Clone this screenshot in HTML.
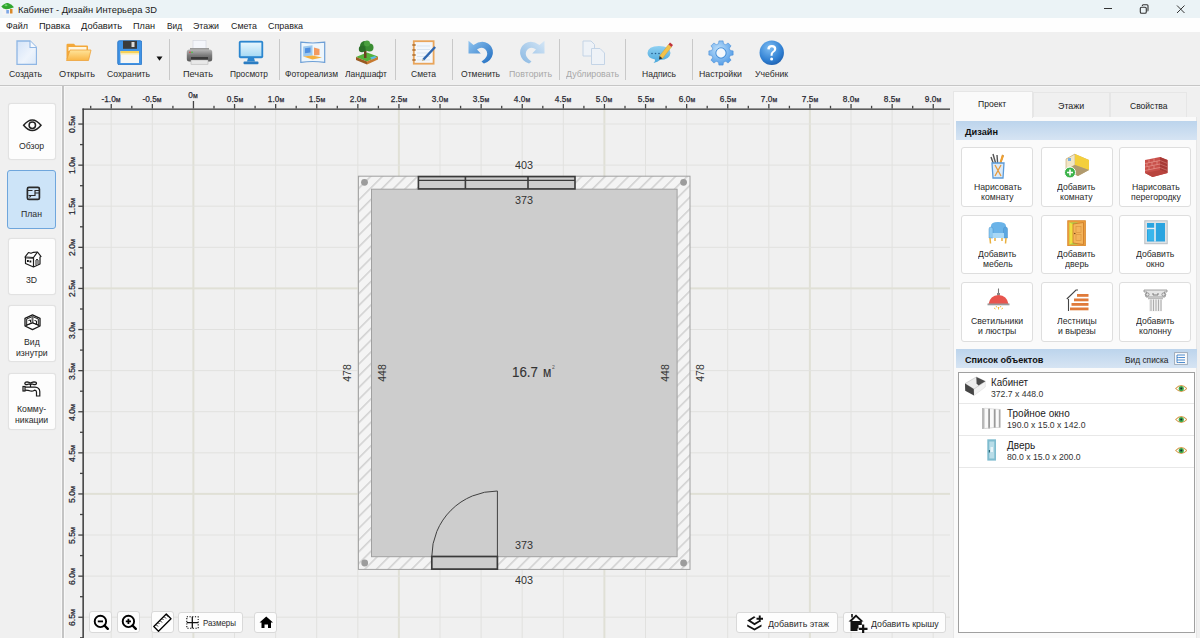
<!DOCTYPE html>
<html><head><meta charset="utf-8"><style>
*{margin:0;padding:0;box-sizing:border-box}
html,body{width:1200px;height:638px;overflow:hidden;background:#f0f0f0;font-family:"Liberation Sans",sans-serif;color:#222;position:relative}
.abs{position:absolute}
.rl{position:absolute;width:60px;text-align:center;font-size:9px;line-height:10px;color:#2a2a34;white-space:nowrap;transform:scaleX(.92);-webkit-text-stroke:0.25px #2a2a34}
.m{font-size:7.5px}
.rv{position:absolute;width:60px;text-align:center;font-size:9px;line-height:10px;color:#2a2a34;transform:rotate(-90deg) scaleX(.95);white-space:nowrap;-webkit-text-stroke:0.25px #2a2a34}
</style></head><body>
<div class="abs" style="left:0;top:0;width:1200px;height:17.5px;background:#ebf3f6"></div>
<div class="abs" style="left:0;top:17.5px;width:1200px;height:14.8px;background:#fefefe"></div>
<div class="abs" style="left:0;top:32.3px;width:1200px;height:52.7px;background:#f0f0f0"></div>
<div class="abs" style="left:0;top:84.8px;width:1200px;height:1.4px;background:#c6c6c6"></div><div class="abs" style="left:0;top:86.2px;width:1200px;height:1px;background:#f7f7f7"></div>
<svg class="abs" style="left:0;top:0" width="18" height="18" viewBox="0 0 18 18">
<path d="M2.5 8.5 L13 8.5 L13 15 L2.5 15Z" fill="#f4f4f4"/>
<path d="M1.3 6.5 Q5 2.5 8 3 Q12 4.5 14 7.3 Q9 9.5 6 9.3 Q3 9 1.3 6.5Z" fill="#2fa52f"/>
<ellipse cx="6" cy="5.3" rx="1.5" ry="1" fill="#6fd46f"/>
<rect x="6.3" y="10" width="2.6" height="3.5" fill="#7aa6e6"/>
<rect x="10" y="9" width="2.5" height="4.5" fill="#d98a2a"/>
</svg>
<div class="abs" style="left:18.00px;top:3.83px;font-size:9.5px;line-height:12.35px;color:#1a1a1a;white-space:nowrap;transform:scaleX(0.9815);transform-origin:0 50%;">Кабинет - Дизайн Интерьера 3D</div>
<div class="abs" style="left:1103.5px;top:8px;width:8px;height:1px;background:#333"></div>
<svg class="abs" style="left:1138px;top:4px" width="12" height="10" viewBox="0 0 12 10">
<rect x="2.3" y="3.3" width="6" height="6" rx="1.3" fill="none" stroke="#333" stroke-width="1.1"/>
<path d="M4.3 2 L4.3 1.8 Q4.3 0.8 5.3 0.8 L9 0.8 Q10 0.8 10 1.8 L10 6 Q10 7 9.5 7" fill="none" stroke="#333" stroke-width="1.1"/>
</svg>
<svg class="abs" style="left:1176px;top:4.5px" width="10" height="9" viewBox="0 0 10 9">
<path d="M1 0.5 L8.5 8 M8.5 0.5 L1 8" stroke="#333" stroke-width="1"/></svg>
<div class="abs" style="left:6.00px;top:20.25px;font-size:9.8px;line-height:11.7px;color:#1a1a1a;white-space:nowrap;transform:scaleX(0.9131);transform-origin:0 50%;">Файл</div>
<div class="abs" style="left:39.20px;top:20.25px;font-size:9.8px;line-height:11.7px;color:#1a1a1a;white-space:nowrap;transform:scaleX(0.9367);transform-origin:0 50%;">Правка</div>
<div class="abs" style="left:81.00px;top:20.25px;font-size:9.8px;line-height:11.7px;color:#1a1a1a;white-space:nowrap;transform:scaleX(0.9470);transform-origin:0 50%;">Добавить</div>
<div class="abs" style="left:133.00px;top:20.25px;font-size:9.8px;line-height:11.7px;color:#1a1a1a;white-space:nowrap;transform:scaleX(0.9312);transform-origin:0 50%;">План</div>
<div class="abs" style="left:167.00px;top:20.25px;font-size:9.8px;line-height:11.7px;color:#1a1a1a;white-space:nowrap;transform:scaleX(0.8458);transform-origin:0 50%;">Вид</div>
<div class="abs" style="left:193.00px;top:20.25px;font-size:9.8px;line-height:11.7px;color:#1a1a1a;white-space:nowrap;transform:scaleX(0.8995);transform-origin:0 50%;">Этажи</div>
<div class="abs" style="left:231.00px;top:20.25px;font-size:9.8px;line-height:11.7px;color:#1a1a1a;white-space:nowrap;transform:scaleX(0.9039);transform-origin:0 50%;">Смета</div>
<div class="abs" style="left:268.00px;top:20.25px;font-size:9.8px;line-height:11.7px;color:#1a1a1a;white-space:nowrap;transform:scaleX(0.9106);transform-origin:0 50%;">Справка</div>
<div class="abs" style="left:9.20px;top:68.25px;font-size:9.8px;line-height:11.7px;color:#2a2a2a;white-space:nowrap;transform:scaleX(0.8863);transform-origin:0 50%;">Создать</div>
<div class="abs" style="left:59.00px;top:68.25px;font-size:9.8px;line-height:11.7px;color:#2a2a2a;white-space:nowrap;transform:scaleX(0.9354);transform-origin:0 50%;">Открыть</div>
<div class="abs" style="left:107.00px;top:68.25px;font-size:9.8px;line-height:11.7px;color:#2a2a2a;white-space:nowrap;transform:scaleX(0.8832);transform-origin:0 50%;">Сохранить</div>
<div class="abs" style="left:183.00px;top:68.25px;font-size:9.8px;line-height:11.7px;color:#2a2a2a;white-space:nowrap;transform:scaleX(0.9348);transform-origin:0 50%;">Печать</div>
<div class="abs" style="left:230.00px;top:68.25px;font-size:9.8px;line-height:11.7px;color:#2a2a2a;white-space:nowrap;transform:scaleX(0.8492);transform-origin:0 50%;">Просмотр</div>
<div class="abs" style="left:285.00px;top:68.25px;font-size:9.8px;line-height:11.7px;color:#2a2a2a;white-space:nowrap;transform:scaleX(0.8649);transform-origin:0 50%;">Фотореализм</div>
<div class="abs" style="left:345.00px;top:68.25px;font-size:9.8px;line-height:11.7px;color:#2a2a2a;white-space:nowrap;transform:scaleX(0.8632);transform-origin:0 50%;">Ландшафт</div>
<div class="abs" style="left:411.00px;top:68.25px;font-size:9.8px;line-height:11.7px;color:#2a2a2a;white-space:nowrap;transform:scaleX(0.8691);transform-origin:0 50%;">Смета</div>
<div class="abs" style="left:460.50px;top:68.25px;font-size:9.8px;line-height:11.7px;color:#2a2a2a;white-space:nowrap;transform:scaleX(0.8712);transform-origin:0 50%;">Отменить</div>
<div class="abs" style="left:508.90px;top:68.25px;font-size:9.8px;line-height:11.7px;color:#a8a8a8;white-space:nowrap;transform:scaleX(0.8991);transform-origin:0 50%;">Повторить</div>
<div class="abs" style="left:565.50px;top:68.25px;font-size:9.8px;line-height:11.7px;color:#a8a8a8;white-space:nowrap;transform:scaleX(0.8976);transform-origin:0 50%;">Дублировать</div>
<div class="abs" style="left:641.80px;top:68.25px;font-size:9.8px;line-height:11.7px;color:#2a2a2a;white-space:nowrap;transform:scaleX(0.8711);transform-origin:0 50%;">Надпись</div>
<div class="abs" style="left:699.00px;top:68.25px;font-size:9.8px;line-height:11.7px;color:#2a2a2a;white-space:nowrap;transform:scaleX(0.8950);transform-origin:0 50%;">Настройки</div>
<div class="abs" style="left:754.90px;top:68.25px;font-size:9.8px;line-height:11.7px;color:#2a2a2a;white-space:nowrap;transform:scaleX(0.8811);transform-origin:0 50%;">Учебник</div>
<div class="abs" style="left:168.5px;top:38.5px;width:1.2px;height:41.5px;background:#c9c9c9"></div>
<div class="abs" style="left:279.0px;top:38.5px;width:1.2px;height:41.5px;background:#c9c9c9"></div>
<div class="abs" style="left:395.0px;top:38.5px;width:1.2px;height:41.5px;background:#c9c9c9"></div>
<div class="abs" style="left:451.5px;top:38.5px;width:1.2px;height:41.5px;background:#c9c9c9"></div>
<div class="abs" style="left:559.0px;top:38.5px;width:1.2px;height:41.5px;background:#c9c9c9"></div>
<div class="abs" style="left:625.2px;top:38.5px;width:1.2px;height:41.5px;background:#c9c9c9"></div>
<div class="abs" style="left:691.5px;top:38.5px;width:1.2px;height:41.5px;background:#c9c9c9"></div>
<svg class="abs" style="left:156px;top:56px" width="7" height="5"><path d="M0.5 0.5 L6.5 0.5 L3.5 4.8Z" fill="#111"/></svg>
<svg class="abs" style="left:15.5px;top:39.5px" width="21.5" height="25.5" viewBox="0 0 21.5 25.5">
<defs><linearGradient id="gdoc" x1="0" y1="0" x2="1" y2="1"><stop offset="0" stop-color="#d3e3f8"/><stop offset="0.6" stop-color="#eef4fc"/><stop offset="1" stop-color="#dbe8f8"/></linearGradient></defs>
<path d="M1 1 L14 1 L20.5 7.5 L20.5 24.5 L1 24.5Z" fill="url(#gdoc)" stroke="#8fb6e4" stroke-width="1.3"/>
<path d="M14 1 L14 7.5 L20.5 7.5" fill="#f6f9fd" stroke="#8fb6e4" stroke-width="1.1"/></svg>
<svg class="abs" style="left:64.5px;top:42.5px" width="27" height="18.5" viewBox="0 0 27 18.5">
<defs><linearGradient id="gfold" x1="0" y1="0" x2="0" y2="1"><stop offset="0" stop-color="#ffe49a"/><stop offset="1" stop-color="#f9b646"/></linearGradient></defs>
<path d="M1.5 2 Q1.5 0.8 2.7 0.8 L9 0.8 L10.5 2.5 L22 2.5 Q23 2.5 23 3.5 L23 16 L1.5 16Z" fill="#f3a83a"/>
<path d="M3.5 4 L21.5 4 L21.5 8 L3.5 8Z" fill="#fff6e0"/>
<path d="M5 7 L26 7 L23.5 17.5 L1.5 17.5 Z" fill="url(#gfold)" stroke="#eea23a" stroke-width="0.8"/></svg>
<svg class="abs" style="left:116.5px;top:39.5px" width="25.5" height="25.5" viewBox="0 0 25.5 25.5">
<rect x="0.8" y="0.8" width="24" height="24" rx="1.5" fill="#3f93e6" stroke="#2d78c8" stroke-width="1"/>
<rect x="6" y="0.8" width="14" height="8" fill="#3b3b3b"/>
<rect x="14.5" y="2" width="3" height="5" fill="#dcdcdc"/>
<rect x="3.5" y="11" width="18.5" height="12" fill="#f6f6f4"/>
<rect x="3.5" y="11" width="18.5" height="2.3" fill="#f6d15a"/>
<rect x="3.5" y="13.3" width="18.5" height="1.2" fill="#fbeaa8"/></svg>
<svg class="abs" style="left:186px;top:39.5px" width="27" height="25" viewBox="0 0 27 25">
<defs><linearGradient id="gpr" x1="0" y1="0" x2="0" y2="1"><stop offset="0" stop-color="#b8b8b8"/><stop offset="0.5" stop-color="#7a7a7a"/><stop offset="1" stop-color="#5a5a5a"/></linearGradient></defs>
<rect x="7" y="0.5" width="13" height="10" fill="#f4f6fb" stroke="#d0d4dc" stroke-width="0.6"/>
<path d="M4 8 L23 8 L23 10 L4 10Z" fill="#9a9a9a"/>
<rect x="0.8" y="9.5" width="25.4" height="12" rx="2.5" fill="url(#gpr)"/>
<rect x="5" y="17" width="17" height="3" fill="#3a3a3a"/>
<rect x="5" y="20" width="17" height="4.2" fill="#e8e8e8" stroke="#aaa" stroke-width="0.5"/>
<circle cx="4" cy="12.2" r="0.8" fill="#d33"/><circle cx="6" cy="12.2" r="0.8" fill="#3c3"/></svg>
<svg class="abs" style="left:237.5px;top:39.5px" width="26" height="25" viewBox="0 0 26 25">
<defs><linearGradient id="gmon" x1="0" y1="0" x2="0" y2="1"><stop offset="0" stop-color="#e6f6fd"/><stop offset="1" stop-color="#a8daf4"/></linearGradient></defs>
<rect x="0.8" y="0.8" width="24.4" height="17.5" rx="1.8" fill="#2b86cf"/>
<rect x="2.6" y="2.6" width="20.8" height="13.6" fill="url(#gmon)"/>
<path d="M10 18 L16 18 L17 21.5 L9 21.5Z" fill="#2b86cf"/>
<rect x="5.5" y="21.5" width="15" height="2.8" rx="1" fill="#2b7cc2"/></svg>
<svg class="abs" style="left:300px;top:41px" width="25.5" height="22.5" viewBox="0 0 25.5 22.5">
<path d="M0.8 1.2 Q12.7 2.8 24.7 1.2 L24.7 21.3 Q12.7 19.7 0.8 21.3Z" fill="#eef6fc" stroke="#6d9fd6" stroke-width="1.2"/>
<path d="M3.2 5.5 L12.5 4.2 L12.5 14.5 L3.2 15.5Z" fill="#9cc8ee"/>
<path d="M5 7.2 L10.5 6.5 L10.5 11.5 L5 12.2Z" fill="#4f8fe0"/>
<path d="M14 6.5 L19.5 8 L19.5 14 L14 14.5Z" fill="#f39a60"/>
<path d="M3.2 15.5 L12.5 14.5 L22 16.5 L12.5 18.5Z" fill="#f4b040"/>
</svg>
<svg class="abs" style="left:354.5px;top:39.5px" width="24" height="25" viewBox="0 0 24 25">
<path d="M1 17 L12 12.5 L23 16.5 L12 21.5Z" fill="#55b13a"/>
<path d="M1 17 L12 21.5 L12 24.5 L1 20Z" fill="#9a5a22"/>
<path d="M12 21.5 L23 16.5 L23 19.5 L12 24.5Z" fill="#c77a30"/>
<path d="M15 17.5 L20 16 L21.5 17.5 L17 19.5Z" fill="#5bb8e8"/>
<rect x="9" y="9" width="2.5" height="9" fill="#6b4220"/>
<circle cx="10" cy="6" r="5" fill="#2e7a2a"/><circle cx="14.5" cy="7.5" r="4" fill="#3a8d33"/><circle cx="7" cy="9" r="3.2" fill="#2a6e27"/><circle cx="12" cy="3.5" r="3" fill="#4aa03f"/></svg>
<svg class="abs" style="left:411px;top:39.5px" width="26" height="25" viewBox="0 0 26 25">
<rect x="2.8" y="1.2" width="19.8" height="22.5" fill="#f3f7fc" stroke="#e9a55b" stroke-width="1.8"/>
<path d="M6 6 L19 6 M6 9.5 L19 9.5 M6 13 L19 13 M6 16.5 L19 16.5 M6 20 L19 20" stroke="#cddbea" stroke-width="0.7"/>
<g fill="#b77a3e"><ellipse cx="3" cy="5" rx="2" ry="1.1"/><ellipse cx="3" cy="10" rx="2" ry="1.1"/><ellipse cx="3" cy="15" rx="2" ry="1.1"/><ellipse cx="3" cy="20" rx="2" ry="1.1"/></g>
<path d="M11.5 18.8 L23.3 6.2 L25 7.8 L13.2 20.4Z" fill="#2f67b0"/>
<path d="M11.5 18.8 L13.2 20.4 L10.8 21.2Z" fill="#c8b890"/></svg>
<svg class="abs" style="left:467.5px;top:40px" width="26" height="24" viewBox="0 0 26 24">
<defs><linearGradient id="gund" x1="0" y1="0" x2="1" y2="1"><stop offset="0" stop-color="#8fc4f0"/><stop offset="1" stop-color="#1f6cc0"/></linearGradient></defs>
<path d="M0.5 0.8 L0.5 13.5 L12.8 13.5 L9 9.5 Q13 6.5 17 9 Q20.5 12 18.5 16.5 Q17 19.5 13.5 21.5 Q15.5 23.5 16 23.5 Q23.5 21 24.8 14 Q25.5 7 20 3.5 Q13.5 -0.5 5.5 5Z" fill="url(#gund)"/></svg>
<svg class="abs" style="left:519px;top:40px" width="26" height="24" viewBox="0 0 26 24">
<defs><linearGradient id="gred" x1="1" y1="0" x2="0" y2="1"><stop offset="0" stop-color="#d4e6f6"/><stop offset="1" stop-color="#8ab8e2"/></linearGradient></defs>
<path d="M25.5 0.8 L25.5 13.5 L13.2 13.5 L17 9.5 Q13 6.5 9 9 Q5.5 12 7.5 16.5 Q9 19.5 12.5 21.5 Q10.5 23.5 10 23.5 Q2.5 21 1.2 14 Q0.5 7 6 3.5 Q12.5 -0.5 20.5 5Z" fill="url(#gred)"/></svg>
<svg class="abs" style="left:581.5px;top:39.5px" width="23.5" height="25.5" viewBox="0 0 23.5 25.5">
<path d="M1 1 L9 1 L12.5 4.5 L12.5 16 L1 16Z" fill="#eef2f7" stroke="#c4d4e6" stroke-width="1"/>
<path d="M9.5 8.5 L18 8.5 L22.5 13 L22.5 24.5 L9.5 24.5Z" fill="#eef2f7" stroke="#c4d4e6" stroke-width="1"/></svg>
<svg class="abs" style="left:647px;top:41px" width="26" height="23" viewBox="0 0 26 23">
<defs><linearGradient id="gbub" x1="0" y1="0" x2="0" y2="1"><stop offset="0" stop-color="#8fd0f2"/><stop offset="1" stop-color="#4aa8dc"/></linearGradient></defs>
<path d="M12 5 Q23 5 23.5 12 Q23 18.5 13 19 Q11 21 6.5 22 Q8.5 20 8 18.5 Q0.5 17 0.5 12 Q1 5 12 5Z" fill="url(#gbub)"/>
<circle cx="5" cy="12.5" r="0.8" fill="#245e8f"/><circle cx="8.5" cy="12.5" r="0.8" fill="#245e8f"/><circle cx="12" cy="12.5" r="0.8" fill="#245e8f"/>
<path d="M12.5 15 L21.5 3.5 L24.5 6 L15.5 17.5Z" fill="#f3c24a" stroke="#c99a2a" stroke-width="0.4"/>
<path d="M21.5 3.5 L23 1.5 L26 4 L24.5 6Z" fill="#c0333a"/>
<path d="M12.5 15 L15.5 17.5 L12 18.5Z" fill="#333"/></svg>
<svg class="abs" style="left:708px;top:39.5px" width="26" height="26" viewBox="0 0 26 26">
<defs><radialGradient id="ggear" cx="0.4" cy="0.35" r="0.7"><stop offset="0" stop-color="#bfe0fb"/><stop offset="1" stop-color="#4f9ae6"/></radialGradient></defs>
<polygon points="22.28,10.53 25.12,10.92 25.12,15.08 22.28,15.47 21.31,17.81 23.04,20.10 20.10,23.04 17.81,21.31 15.47,22.28 15.08,25.12 10.92,25.12 10.53,22.28 8.19,21.31 5.90,23.04 2.96,20.10 4.69,17.81 3.72,15.47 0.88,15.08 0.88,10.92 3.72,10.53 4.69,8.19 2.96,5.90 5.90,2.96 8.19,4.69 10.53,3.72 10.92,0.88 15.08,0.88 15.47,3.72 17.81,4.69 20.10,2.96 23.04,5.90 21.31,8.19" fill="url(#ggear)" stroke="#4a8fd8" stroke-width="0.6"/>
<circle cx="13" cy="13" r="5.2" fill="none" stroke="#3d86d2" stroke-width="0.8"/>
<circle cx="13" cy="13" r="4.4" fill="#f4f8fc"/></svg>
<svg class="abs" style="left:759px;top:39.5px" width="25.5" height="25.5" viewBox="0 0 25.5 25.5">
<defs><radialGradient id="ghelp" cx="0.4" cy="0.3" r="0.75"><stop offset="0" stop-color="#7dbdf3"/><stop offset="0.7" stop-color="#2f7fd2"/><stop offset="1" stop-color="#1f5fae"/></radialGradient></defs>
<circle cx="12.75" cy="12.75" r="12.2" fill="url(#ghelp)"/>
<path d="M8.3 9.2 Q8.5 5 12.8 5 Q17.3 5.2 17.3 9 Q17.2 11.5 14.5 12.8 Q13.5 13.5 13.6 15.8 L11.5 15.8 Q11.3 12.5 13.5 11.2 Q15.2 10.2 15 9 Q14.8 7.2 12.8 7.2 Q10.8 7.3 10.7 9.4Z" fill="#fff"/>
<circle cx="12.6" cy="19" r="1.5" fill="#fff"/></svg>
<svg class="abs" width="1200" height="638" style="left:0;top:0">
<rect x="110.70" y="110" width="1" height="528" fill="#e1e1df"/>
<rect x="151.80" y="110" width="1" height="528" fill="#e1e1df"/>
<rect x="192.40" y="110" width="2" height="528" fill="#e0e0d6"/>
<rect x="234.00" y="110" width="1" height="528" fill="#e1e1df"/>
<rect x="275.10" y="110" width="1" height="528" fill="#e1e1df"/>
<rect x="316.20" y="110" width="1" height="528" fill="#e1e1df"/>
<rect x="357.30" y="110" width="1" height="528" fill="#e1e1df"/>
<rect x="397.90" y="110" width="2" height="528" fill="#e0e0d6"/>
<rect x="439.50" y="110" width="1" height="528" fill="#e1e1df"/>
<rect x="480.60" y="110" width="1" height="528" fill="#e1e1df"/>
<rect x="521.70" y="110" width="1" height="528" fill="#e1e1df"/>
<rect x="562.80" y="110" width="1" height="528" fill="#e1e1df"/>
<rect x="603.40" y="110" width="2" height="528" fill="#e0e0d6"/>
<rect x="645.00" y="110" width="1" height="528" fill="#e1e1df"/>
<rect x="686.10" y="110" width="1" height="528" fill="#e1e1df"/>
<rect x="727.20" y="110" width="1" height="528" fill="#e1e1df"/>
<rect x="768.30" y="110" width="1" height="528" fill="#e1e1df"/>
<rect x="808.90" y="110" width="2" height="528" fill="#e0e0d6"/>
<rect x="850.50" y="110" width="1" height="528" fill="#e1e1df"/>
<rect x="891.60" y="110" width="1" height="528" fill="#e1e1df"/>
<rect x="932.70" y="110" width="1" height="528" fill="#e1e1df"/>
<rect x="84" y="123.50" width="866" height="1" fill="#e1e1df"/>
<rect x="84" y="164.60" width="866" height="1" fill="#e1e1df"/>
<rect x="84" y="205.70" width="866" height="1" fill="#e1e1df"/>
<rect x="84" y="246.80" width="866" height="1" fill="#e1e1df"/>
<rect x="84" y="287.40" width="866" height="2" fill="#e0e0d6"/>
<rect x="84" y="329.00" width="866" height="1" fill="#e1e1df"/>
<rect x="84" y="370.10" width="866" height="1" fill="#e1e1df"/>
<rect x="84" y="411.20" width="866" height="1" fill="#e1e1df"/>
<rect x="84" y="452.30" width="866" height="1" fill="#e1e1df"/>
<rect x="84" y="492.90" width="866" height="2" fill="#e0e0d6"/>
<rect x="84" y="534.50" width="866" height="1" fill="#e1e1df"/>
<rect x="84" y="575.60" width="866" height="1" fill="#e1e1df"/>
<rect x="84" y="616.70" width="866" height="1" fill="#e1e1df"/>
<rect x="82.5" y="108.5" width="867.5" height="1.3" fill="#3a3a3a"/>
<rect x="82.4" y="108.5" width="1.5" height="530" fill="#3a3a3a"/>
<rect x="90.05" y="105.8" width="1.3" height="2.7" fill="#444"/>
<rect x="110.60" y="104" width="1.3" height="4.5" fill="#444"/>
<rect x="131.15" y="105.8" width="1.3" height="2.7" fill="#444"/>
<rect x="151.70" y="104" width="1.3" height="4.5" fill="#444"/>
<rect x="172.25" y="105.8" width="1.3" height="2.7" fill="#444"/>
<rect x="192.80" y="101" width="1.3" height="7.5" fill="#444"/>
<rect x="213.35" y="105.8" width="1.3" height="2.7" fill="#444"/>
<rect x="233.90" y="104" width="1.3" height="4.5" fill="#444"/>
<rect x="254.45" y="105.8" width="1.3" height="2.7" fill="#444"/>
<rect x="275.00" y="104" width="1.3" height="4.5" fill="#444"/>
<rect x="295.55" y="105.8" width="1.3" height="2.7" fill="#444"/>
<rect x="316.10" y="104" width="1.3" height="4.5" fill="#444"/>
<rect x="336.65" y="105.8" width="1.3" height="2.7" fill="#444"/>
<rect x="357.20" y="104" width="1.3" height="4.5" fill="#444"/>
<rect x="377.75" y="105.8" width="1.3" height="2.7" fill="#444"/>
<rect x="398.30" y="104" width="1.3" height="4.5" fill="#444"/>
<rect x="418.85" y="105.8" width="1.3" height="2.7" fill="#444"/>
<rect x="439.40" y="104" width="1.3" height="4.5" fill="#444"/>
<rect x="459.95" y="105.8" width="1.3" height="2.7" fill="#444"/>
<rect x="480.50" y="104" width="1.3" height="4.5" fill="#444"/>
<rect x="501.05" y="105.8" width="1.3" height="2.7" fill="#444"/>
<rect x="521.60" y="104" width="1.3" height="4.5" fill="#444"/>
<rect x="542.15" y="105.8" width="1.3" height="2.7" fill="#444"/>
<rect x="562.70" y="104" width="1.3" height="4.5" fill="#444"/>
<rect x="583.25" y="105.8" width="1.3" height="2.7" fill="#444"/>
<rect x="603.80" y="104" width="1.3" height="4.5" fill="#444"/>
<rect x="624.35" y="105.8" width="1.3" height="2.7" fill="#444"/>
<rect x="644.90" y="104" width="1.3" height="4.5" fill="#444"/>
<rect x="665.45" y="105.8" width="1.3" height="2.7" fill="#444"/>
<rect x="686.00" y="104" width="1.3" height="4.5" fill="#444"/>
<rect x="706.55" y="105.8" width="1.3" height="2.7" fill="#444"/>
<rect x="727.10" y="104" width="1.3" height="4.5" fill="#444"/>
<rect x="747.65" y="105.8" width="1.3" height="2.7" fill="#444"/>
<rect x="768.20" y="104" width="1.3" height="4.5" fill="#444"/>
<rect x="788.75" y="105.8" width="1.3" height="2.7" fill="#444"/>
<rect x="809.30" y="104" width="1.3" height="4.5" fill="#444"/>
<rect x="829.85" y="105.8" width="1.3" height="2.7" fill="#444"/>
<rect x="850.40" y="104" width="1.3" height="4.5" fill="#444"/>
<rect x="870.95" y="105.8" width="1.3" height="2.7" fill="#444"/>
<rect x="891.50" y="104" width="1.3" height="4.5" fill="#444"/>
<rect x="912.05" y="105.8" width="1.3" height="2.7" fill="#444"/>
<rect x="932.60" y="104" width="1.3" height="4.5" fill="#444"/>
<rect x="78.3" y="123.40" width="4.7" height="1.3" fill="#444"/>
<rect x="80" y="143.95" width="3.0" height="1.3" fill="#444"/>
<rect x="78.3" y="164.50" width="4.7" height="1.3" fill="#444"/>
<rect x="80" y="185.05" width="3.0" height="1.3" fill="#444"/>
<rect x="78.3" y="205.60" width="4.7" height="1.3" fill="#444"/>
<rect x="80" y="226.15" width="3.0" height="1.3" fill="#444"/>
<rect x="78.3" y="246.70" width="4.7" height="1.3" fill="#444"/>
<rect x="80" y="267.25" width="3.0" height="1.3" fill="#444"/>
<rect x="78.3" y="287.80" width="4.7" height="1.3" fill="#444"/>
<rect x="80" y="308.35" width="3.0" height="1.3" fill="#444"/>
<rect x="78.3" y="328.90" width="4.7" height="1.3" fill="#444"/>
<rect x="80" y="349.45" width="3.0" height="1.3" fill="#444"/>
<rect x="78.3" y="370.00" width="4.7" height="1.3" fill="#444"/>
<rect x="80" y="390.55" width="3.0" height="1.3" fill="#444"/>
<rect x="78.3" y="411.10" width="4.7" height="1.3" fill="#444"/>
<rect x="80" y="431.65" width="3.0" height="1.3" fill="#444"/>
<rect x="78.3" y="452.20" width="4.7" height="1.3" fill="#444"/>
<rect x="80" y="472.75" width="3.0" height="1.3" fill="#444"/>
<rect x="78.3" y="493.30" width="4.7" height="1.3" fill="#444"/>
<rect x="80" y="513.85" width="3.0" height="1.3" fill="#444"/>
<rect x="78.3" y="534.40" width="4.7" height="1.3" fill="#444"/>
<rect x="80" y="554.95" width="3.0" height="1.3" fill="#444"/>
<rect x="78.3" y="575.50" width="4.7" height="1.3" fill="#444"/>
<rect x="80" y="596.05" width="3.0" height="1.3" fill="#444"/>
<rect x="78.3" y="616.60" width="4.7" height="1.3" fill="#444"/>
<rect x="80" y="637.15" width="3.0" height="1.3" fill="#444"/>
</svg>
<div class="rl" style="left:81.2px;top:93.8px">-1.0<span class="m">м</span></div>
<div class="rl" style="left:122.3px;top:93.8px">-0.5<span class="m">м</span></div>
<div class="rl" style="left:163.4px;top:89.8px">0<span class="m">м</span></div>
<div class="rl" style="left:204.5px;top:93.8px">0.5<span class="m">м</span></div>
<div class="rl" style="left:245.6px;top:93.8px">1.0<span class="m">м</span></div>
<div class="rl" style="left:286.7px;top:93.8px">1.5<span class="m">м</span></div>
<div class="rl" style="left:327.8px;top:93.8px">2.0<span class="m">м</span></div>
<div class="rl" style="left:368.9px;top:93.8px">2.5<span class="m">м</span></div>
<div class="rl" style="left:410.0px;top:93.8px">3.0<span class="m">м</span></div>
<div class="rl" style="left:451.1px;top:93.8px">3.5<span class="m">м</span></div>
<div class="rl" style="left:492.2px;top:93.8px">4.0<span class="m">м</span></div>
<div class="rl" style="left:533.3px;top:93.8px">4.5<span class="m">м</span></div>
<div class="rl" style="left:574.4px;top:93.8px">5.0<span class="m">м</span></div>
<div class="rl" style="left:615.5px;top:93.8px">5.5<span class="m">м</span></div>
<div class="rl" style="left:656.6px;top:93.8px">6.0<span class="m">м</span></div>
<div class="rl" style="left:697.7px;top:93.8px">6.5<span class="m">м</span></div>
<div class="rl" style="left:738.8px;top:93.8px">7.0<span class="m">м</span></div>
<div class="rl" style="left:779.9px;top:93.8px">7.5<span class="m">м</span></div>
<div class="rl" style="left:821.0px;top:93.8px">8.0<span class="m">м</span></div>
<div class="rl" style="left:862.1px;top:93.8px">8.5<span class="m">м</span></div>
<div class="rl" style="left:903.2px;top:93.8px">9.0<span class="m">м</span></div>
<div class="rv" style="left:42px;top:119.0px">0.5<span class="m">м</span></div>
<div class="rv" style="left:42px;top:160.1px">1.0<span class="m">м</span></div>
<div class="rv" style="left:42px;top:201.2px">1.5<span class="m">м</span></div>
<div class="rv" style="left:42px;top:242.3px">2.0<span class="m">м</span></div>
<div class="rv" style="left:42px;top:283.4px">2.5<span class="m">м</span></div>
<div class="rv" style="left:42px;top:324.5px">3.0<span class="m">м</span></div>
<div class="rv" style="left:42px;top:365.6px">3.5<span class="m">м</span></div>
<div class="rv" style="left:42px;top:406.7px">4.0<span class="m">м</span></div>
<div class="rv" style="left:42px;top:447.8px">4.5<span class="m">м</span></div>
<div class="rv" style="left:42px;top:488.9px">5.0<span class="m">м</span></div>
<div class="rv" style="left:42px;top:530.0px">5.5<span class="m">м</span></div>
<div class="rv" style="left:42px;top:571.1px">6.0<span class="m">м</span></div>
<div class="rv" style="left:42px;top:612.2px">6.5<span class="m">м</span></div>
<svg class="abs" style="left:0;top:0" width="1200" height="638" viewBox="0 0 1200 638">
<defs><pattern id="hatch" patternUnits="userSpaceOnUse" width="8.291" height="8.291" patternTransform="rotate(45 0 0)"><rect width="8.291" height="8.291" fill="#f4f4f4"/><rect x="5.09" y="0" width="0.75" height="8.291" fill="#adadad"/></pattern>
<clipPath id="wallclip"><path fill-rule="evenodd" d="M358.4 176.2 H690.0 V569.4 H358.4 Z M371.5 189.2 H677.1 V556.7 H371.5 Z"/></clipPath></defs>
<path fill-rule="evenodd" fill="url(#hatch)" d="M358.4 176.2 H690.0 V569.4 H358.4 Z M371.5 189.2 H677.1 V556.7 H371.5 Z"/>
<rect x="371.5" y="189.2" width="305.6" height="367.5" fill="#cdcdcd"/>
<rect x="358.4" y="176.2" width="331.6" height="393.2" fill="none" stroke="#a0a0a0" stroke-width="1"/>
<rect x="371.5" y="189.2" width="305.6" height="367.5" fill="none" stroke="#a0a0a0" stroke-width="1"/>
<circle cx="364.5" cy="182.3" r="3.4" fill="#9c9c9c"/>
<circle cx="683.6" cy="182.3" r="3.4" fill="#9c9c9c"/>
<circle cx="364.7" cy="563" r="3.4" fill="#9c9c9c"/>
<circle cx="683.6" cy="563" r="3.4" fill="#9c9c9c"/>
<rect x="418.4" y="176.6" width="156.6" height="12.3" fill="#cdcdcd" stroke="#3a3a3a" stroke-width="1.6"/>
<path d="M418.4 180.4 H575" stroke="#3a3a3a" stroke-width="1.4"/>
<path d="M465.4 176.6 V188.9 M528 176.6 V188.9" stroke="#3a3a3a" stroke-width="1.6"/>
<rect x="431.8" y="556.5" width="65.6" height="12.6" fill="#cdcdcd" stroke="#3a3a3a" stroke-width="1.7"/>
<path d="M431.8 556.5 A65.6 65.6 0 0 1 497.4 491 V556.5" fill="none" stroke="#404040" stroke-width="1"/>
</svg>
<div class="abs" style="left:515.00px;top:157.65px;font-size:11px;line-height:14.3px;color:#333;white-space:nowrap;transform:scaleX(0.9804);transform-origin:0 50%;">403</div>
<div class="abs" style="left:515.00px;top:192.95px;font-size:11px;line-height:14.3px;color:#333;white-space:nowrap;transform:scaleX(0.9804);transform-origin:0 50%;">373</div>
<div class="abs" style="left:515.30px;top:538.25px;font-size:11px;line-height:14.3px;color:#333;white-space:nowrap;transform:scaleX(0.9804);transform-origin:0 50%;">373</div>
<div class="abs" style="left:515.30px;top:573.45px;font-size:11px;line-height:14.3px;color:#333;white-space:nowrap;transform:scaleX(0.9804);transform-origin:0 50%;">403</div>
<div class="abs" style="left:326.7px;top:365.5px;width:40px;height:14px;line-height:14px;text-align:center;font-size:11px;color:#333;transform:rotate(-90deg) scaleX(.95)">478</div>
<div class="abs" style="left:362px;top:365.5px;width:40px;height:14px;line-height:14px;text-align:center;font-size:11px;color:#333;transform:rotate(-90deg) scaleX(.95)">448</div>
<div class="abs" style="left:645px;top:365.5px;width:40px;height:14px;line-height:14px;text-align:center;font-size:11px;color:#333;transform:rotate(-90deg) scaleX(.95)">448</div>
<div class="abs" style="left:680px;top:365.5px;width:40px;height:14px;line-height:14px;text-align:center;font-size:11px;color:#333;transform:rotate(-90deg) scaleX(.95)">478</div>
<div class="abs" style="left:512.00px;top:363.10px;font-size:15.5px;line-height:18px;color:#333;white-space:nowrap;transform:scaleX(0.8617);transform-origin:0 50%;-webkit-text-stroke:0.12px #333;">16.7</div>
<div class="abs" style="left:542.70px;top:363.10px;font-size:15.5px;line-height:18px;color:#333;white-space:nowrap;transform:scaleX(0.7789);transform-origin:0 50%;-webkit-text-stroke:0.12px #333;">м</div>
<div class="abs" style="left:552.30px;top:363.00px;font-size:6px;line-height:8px;color:#555;white-space:nowrap;transform:scaleX(0.8374);transform-origin:0 50%;">2</div>
<div class="abs" style="left:61px;top:86px;width:1px;height:552px;background:#f8f8f8"></div><div class="abs" style="left:62.2px;top:86px;width:1.4px;height:552px;background:#c4c4c4"></div><div class="abs" style="left:63.8px;top:86px;width:1px;height:552px;background:#f8f8f8"></div>
<div class="abs" style="left:7.8px;top:103.2px;width:47.8px;height:57.3px;border-radius:3px;background:#fdfdfd;border:1px solid #e2e2e2;box-shadow:0 0 1px rgba(0,0,0,.08);"></div>
<div class="abs" style="left:18.95px;top:139.55px;font-size:9.8px;line-height:11.7px;color:#2a2a2a;white-space:nowrap;transform:scaleX(0.8867);transform-origin:0 50%;">Обзор</div>
<div class="abs" style="left:7.0px;top:170.3px;width:49.2px;height:58.7px;border-radius:3px;background:#cde4f8;border:1.2px solid #6fa6dc;"></div>
<div class="abs" style="left:21.03px;top:207.75px;font-size:9.8px;line-height:11.7px;color:#2a2a2a;white-space:nowrap;transform:scaleX(0.8865);transform-origin:0 50%;">План</div>
<div class="abs" style="left:7.8px;top:237.6px;width:47.8px;height:57.3px;border-radius:3px;background:#fdfdfd;border:1px solid #e2e2e2;box-shadow:0 0 1px rgba(0,0,0,.08);"></div>
<div class="abs" style="left:25.94px;top:273.75px;font-size:9.8px;line-height:11.7px;color:#2a2a2a;white-space:nowrap;transform:scaleX(0.8868);transform-origin:0 50%;">3D</div>
<div class="abs" style="left:7.8px;top:304.6px;width:47.8px;height:57.8px;border-radius:3px;background:#fdfdfd;border:1px solid #e2e2e2;box-shadow:0 0 1px rgba(0,0,0,.08);"></div>
<div class="abs" style="left:23.64px;top:336.45px;font-size:9.8px;line-height:11.7px;color:#2a2a2a;white-space:nowrap;transform:scaleX(0.8868);transform-origin:0 50%;">Вид</div>
<div class="abs" style="left:15.68px;top:346.95px;font-size:9.8px;line-height:11.7px;color:#2a2a2a;white-space:nowrap;transform:scaleX(0.8864);transform-origin:0 50%;">изнутри</div>
<div class="abs" style="left:7.8px;top:372.6px;width:47.8px;height:57px;border-radius:3px;background:#fdfdfd;border:1px solid #e2e2e2;box-shadow:0 0 1px rgba(0,0,0,.08);"></div>
<div class="abs" style="left:16.91px;top:403.25px;font-size:9.8px;line-height:11.7px;color:#2a2a2a;white-space:nowrap;transform:scaleX(0.8866);transform-origin:0 50%;">Комму-</div>
<div class="abs" style="left:14.92px;top:413.75px;font-size:9.8px;line-height:11.7px;color:#2a2a2a;white-space:nowrap;transform:scaleX(0.8868);transform-origin:0 50%;">никации</div>
<svg class="abs" style="left:22px;top:118px" width="21" height="15" viewBox="0 0 21 15"><path d="M1.6 7.3 Q10.3 -3.3 19 7.3 Q10.3 17.9 1.6 7.3Z" fill="none" stroke="#222" stroke-width="1.5"/>
<circle cx="10.3" cy="7.3" r="3.2" fill="none" stroke="#222" stroke-width="1.5"/></svg>
<svg class="abs" style="left:25.5px;top:186px" width="15" height="15" viewBox="0 0 15 15"><rect x="1.4" y="1.4" width="12" height="12" rx="1.5" fill="none" stroke="#2a2a2a" stroke-width="1.7"/>
<path d="M2 4.5 L6.5 4.5 M8.5 4.5 L13 4.5 M9 4.5 L9 9.5 L2.5 9.5 M5 9.5 L3.5 11.5 M9 7 L13 7" stroke="#2a2a2a" stroke-width="1.2" fill="none"/></svg>
<svg class="abs" style="left:23.5px;top:251px" width="18" height="17" viewBox="0 0 18 17"><path d="M1 6 L4.5 1.5 L7 2.3 L9.5 1.3 L13.5 1 L17 5.5 L16 6 L16 13 L9.5 16 L1.5 12.5 L1.5 6.5Z" fill="#fff" stroke="#1a1a1a" stroke-width="1.2" stroke-linejoin="round"/>
<path d="M1 6 L9.5 6.5 L13.5 1 M9.5 6.5 L9.5 16" fill="none" stroke="#1a1a1a" stroke-width="1.2"/>
<path d="M1.8 6.6 L9.2 6.9 L9.2 8 L1.8 7.6Z" fill="#555"/>
<rect x="3" y="9" width="1.8" height="2" fill="#111"/><rect x="5.5" y="9.5" width="1.8" height="2" fill="#111"/>
<path d="M12 14 L12 9 Q13 7.5 14 9 L14 13" fill="none" stroke="#1a1a1a" stroke-width="1"/></svg>
<svg class="abs" style="left:23.5px;top:314px" width="17" height="16.5" viewBox="0 0 17 16.5"><path d="M8.5 0.8 L16 4.3 L16 12 L8.5 15.7 L1 12 L1 4.3Z" fill="#fff" stroke="#1a1a1a" stroke-width="1.3" stroke-linejoin="round"/>
<path d="M8.5 2.5 L14.3 5 L14.3 11 L8.5 8.8 L2.7 11 L2.7 5Z" fill="none" stroke="#1a1a1a" stroke-width="1"/>
<path d="M8.5 2.5 L8.5 8.8" stroke="#666" stroke-width="2"/>
<path d="M4.5 6.5 L6.5 6 L6.5 8.5 M10.5 6.5 L12.5 7 L12.5 10" fill="none" stroke="#1a1a1a" stroke-width="1"/>
<path d="M1.5 11.8 L8.5 8.8 L15.5 11.8" fill="none" stroke="#1a1a1a" stroke-width="1.2"/></svg>
<svg class="abs" style="left:22px;top:381px" width="20" height="16.5" viewBox="0 0 20 16.5"><path d="M2.8 2.2 Q3 0.8 5 0.8 L7 1.3 L8.5 2 L10 1.3 L12 0.8 Q14.5 0.8 14.5 2.2 Q14.5 3.6 12 3.6 L10 3 L8.5 3.6 L7 3 L5 3.6 Q2.8 3.6 2.8 2.2Z" fill="#fff" stroke="#1a1a1a" stroke-width="1.2"/>
<path d="M8.5 3.6 L8.5 6" stroke="#1a1a1a" stroke-width="1.2"/>
<path d="M3 6.2 L13 6.2 Q17.5 6.5 17.8 10.5 L17.8 15 L14.5 15 L14.5 10.8 Q14.2 9.2 12.5 9.2 Q10.5 10.5 8.5 10 Q6.5 9.2 3 9.2" fill="#fff" stroke="#1a1a1a" stroke-width="1.2"/>
<rect x="1" y="5.5" width="2" height="4.5" fill="#fff" stroke="#1a1a1a" stroke-width="1.2"/></svg>
<div class="abs" style="left:88.8px;top:611.4px;width:23.2px;height:22px;border-radius:3px;background:#fdfdfd;border:1px solid #d9d9d9"></div>
<div class="abs" style="left:116.5px;top:611.4px;width:23.5px;height:22px;border-radius:3px;background:#fdfdfd;border:1px solid #d9d9d9"></div>
<div class="abs" style="left:150.8px;top:611.4px;width:23.4px;height:22px;border-radius:3px;background:#fdfdfd;border:1px solid #d9d9d9"></div>
<div class="abs" style="left:177.8px;top:611.8px;width:65.2px;height:21.5px;border-radius:3px;background:#fdfdfd;border:1px solid #d9d9d9"></div>
<div class="abs" style="left:254px;top:611.8px;width:23.4px;height:21.5px;border-radius:3px;background:#fdfdfd;border:1px solid #d9d9d9"></div>
<svg class="abs" style="left:92px;top:613px" width="18" height="18" viewBox="0 0 18 18"><circle cx="8.4" cy="8.4" r="5.7" fill="none" stroke="#000" stroke-width="1.9"/>
<path d="M12.5 12.5 L15.8 15.8" stroke="#000" stroke-width="2.4" stroke-linecap="round"/>
<path d="M5.8 8.4 L11 8.4" stroke="#000" stroke-width="1.8"/></svg>
<svg class="abs" style="left:120px;top:613px" width="18" height="18" viewBox="0 0 18 18"><circle cx="8.4" cy="8.4" r="5.7" fill="none" stroke="#000" stroke-width="1.9"/>
<path d="M12.5 12.5 L15.8 15.8" stroke="#000" stroke-width="2.4" stroke-linecap="round"/>
<path d="M5.8 8.4 L11 8.4 M8.4 5.8 L8.4 11" stroke="#000" stroke-width="1.8"/></svg>
<svg class="abs" style="left:152px;top:612px" width="21" height="20" viewBox="0 0 21 20"><path d="M1.8 14.5 L14.3 2 L19 6.7 L6.5 19.2Z" fill="#fff" stroke="#000" stroke-width="1.3" stroke-linejoin="round"/>
<path d="M4.5 13 L6 14.5 M6.5 11 L7.5 12 M8.5 9 L10 10.5 M10.5 7 L11.5 8 M12.5 5 L14 6.5 M14.5 3.5 L15.5 4.5" stroke="#000" stroke-width="0.9"/></svg>
<svg class="abs" style="left:185.5px;top:615.5px" width="13" height="13" viewBox="0 0 13 13"><path d="M0.8 0.8 L12.2 0.8 L12.2 12.2 L0.8 12.2Z" fill="none" stroke="#111" stroke-width="1.1" stroke-dasharray="1.2 1.5"/>
<path d="M6.3 0.8 L6.3 12.2 M0.8 6.6 L12.2 6.6" stroke="#111" stroke-width="1.3"/></svg>
<div class="abs" style="left:203.00px;top:617.25px;font-size:9.8px;line-height:11.7px;color:#2a2a2a;white-space:nowrap;transform:scaleX(0.8104);transform-origin:0 50%;">Размеры</div>
<svg class="abs" style="left:258.5px;top:616px" width="14.5" height="12.5" viewBox="0 0 14.5 12.5"><path d="M7.25 0.5 L14 6.5 L12 6.5 L12 12 L9 12 L9 8.5 L5.5 8.5 L5.5 12 L2.5 12 L2.5 6.5 L0.5 6.5Z" fill="#000"/></svg>
<div class="abs" style="left:735.5px;top:611.6px;width:102.8px;height:21.8px;border-radius:3px;background:#fdfdfd;border:1px solid #d9d9d9"></div>
<div class="abs" style="left:842.6px;top:611.6px;width:103.6px;height:21.8px;border-radius:3px;background:#fdfdfd;border:1px solid #d9d9d9"></div>
<svg class="abs" style="left:746px;top:614px" width="18" height="17" viewBox="0 0 18 17"><path d="M1.2 6.5 L8 2.2 L9.6 3.2 L4.6 6.5 L8.5 9 L12.5 6.8 L14 7.8 L8.5 11.2Z" fill="#111"/>
<path d="M1.2 10.5 L8.5 14.6 L15.5 10.5 L15.5 12.5 L8.5 16.6 L1.2 12.5Z" fill="#111"/>
<path d="M10.5 4.8 L17 4.8 M13.75 1.5 L13.75 8" stroke="#111" stroke-width="1.9"/></svg>
<div class="abs" style="left:768.30px;top:617.55px;font-size:9.8px;line-height:11.7px;color:#2a2a2a;white-space:nowrap;transform:scaleX(0.9079);transform-origin:0 50%;">Добавить этаж</div>
<svg class="abs" style="left:848px;top:612.5px" width="20" height="20" viewBox="0 0 20 20"><path d="M8 1.5 L15.5 8.5 L13.8 8.5 L13.8 12 L10.5 12 L10.5 15.5 L9.5 15.5 L9.5 18 L2.5 18 L2.5 8.5 L0.5 8.5Z" fill="#111"/>
<path d="M8 4 L12.3 8 L4 8Z" fill="#fdfdfd"/>
<path d="M4 1 L4 4.5" stroke="#111" stroke-width="1.6"/>
<path d="M10.8 15.8 L19.5 15.8 M15.15 11.5 L15.15 20" stroke="#111" stroke-width="2.2"/></svg>
<div class="abs" style="left:871.20px;top:617.55px;font-size:9.8px;line-height:11.7px;color:#2a2a2a;white-space:nowrap;transform:scaleX(0.8946);transform-origin:0 50%;">Добавить крышу</div>
<div class="abs" style="left:1033px;top:91.7px;width:77px;height:26px;background:#f0f0f0;border:1px solid #e6e6e6;border-bottom:none"></div>
<div class="abs" style="left:1110px;top:91.7px;width:76.5px;height:26px;background:#f0f0f0;border:1px solid #e6e6e6;border-bottom:none"></div>
<div class="abs" style="left:953px;top:117.3px;width:244px;height:520.7px;background:#fafafa;border-left:1px solid #e6e6e6;border-right:1px solid #e6e6e6"></div>
<div class="abs" style="left:953px;top:91px;width:80px;height:27px;background:#fafafa;border:1px solid #e6e6e6;border-bottom:none"></div>
<div class="abs" style="left:977.85px;top:98.25px;font-size:9.8px;line-height:11.7px;color:#222;white-space:nowrap;transform:scaleX(0.8767);transform-origin:0 50%;">Проект</div>
<div class="abs" style="left:1057.50px;top:99.55px;font-size:9.8px;line-height:11.7px;color:#222;white-space:nowrap;transform:scaleX(0.9064);transform-origin:0 50%;">Этажи</div>
<div class="abs" style="left:1130.25px;top:99.55px;font-size:9.8px;line-height:11.7px;color:#222;white-space:nowrap;transform:scaleX(0.8715);transform-origin:0 50%;">Свойства</div>
<div class="abs" style="left:956px;top:120.8px;width:241px;height:19.7px;background:linear-gradient(#bcd4ec,#d6e4f3)"></div>
<div class="abs" style="left:965.00px;top:127.32px;font-size:9.2px;line-height:11.96px;color:#111;white-space:nowrap;font-weight:bold;">Дизайн</div>
<div class="abs" style="left:961.4px;top:147.4px;width:72px;height:59.6px;background:#fff;border:1px solid #dedede;border-radius:3px"></div>
<div class="abs" style="left:973.54px;top:180.85px;font-size:9.8px;line-height:11.7px;color:#2a2a2a;white-space:nowrap;transform:scaleX(0.8866);transform-origin:0 50%;">Нарисовать</div>
<div class="abs" style="left:981.12px;top:190.85px;font-size:9.8px;line-height:11.7px;color:#2a2a2a;white-space:nowrap;transform:scaleX(0.8862);transform-origin:0 50%;">комнату</div>
<div class="abs" style="left:1040.6px;top:147.4px;width:72px;height:59.6px;background:#fff;border:1px solid #dedede;border-radius:3px"></div>
<div class="abs" style="left:1057.41px;top:180.85px;font-size:9.8px;line-height:11.7px;color:#2a2a2a;white-space:nowrap;transform:scaleX(0.8866);transform-origin:0 50%;">Добавить</div>
<div class="abs" style="left:1060.32px;top:190.85px;font-size:9.8px;line-height:11.7px;color:#2a2a2a;white-space:nowrap;transform:scaleX(0.8862);transform-origin:0 50%;">комнату</div>
<div class="abs" style="left:1119.4px;top:147.4px;width:72px;height:59.6px;background:#fff;border:1px solid #dedede;border-radius:3px"></div>
<div class="abs" style="left:1131.54px;top:180.85px;font-size:9.8px;line-height:11.7px;color:#2a2a2a;white-space:nowrap;transform:scaleX(0.8866);transform-origin:0 50%;">Нарисовать</div>
<div class="abs" style="left:1130.51px;top:190.85px;font-size:9.8px;line-height:11.7px;color:#2a2a2a;white-space:nowrap;transform:scaleX(0.8866);transform-origin:0 50%;">перегородку</div>
<div class="abs" style="left:961.4px;top:214.7px;width:72px;height:59.8px;background:#fff;border:1px solid #dedede;border-radius:3px"></div>
<div class="abs" style="left:978.21px;top:248.15px;font-size:9.8px;line-height:11.7px;color:#2a2a2a;white-space:nowrap;transform:scaleX(0.8866);transform-origin:0 50%;">Добавить</div>
<div class="abs" style="left:982.54px;top:258.15px;font-size:9.8px;line-height:11.7px;color:#2a2a2a;white-space:nowrap;transform:scaleX(0.8863);transform-origin:0 50%;">мебель</div>
<div class="abs" style="left:1040.6px;top:214.7px;width:72px;height:59.8px;background:#fff;border:1px solid #dedede;border-radius:3px"></div>
<div class="abs" style="left:1057.41px;top:248.15px;font-size:9.8px;line-height:11.7px;color:#2a2a2a;white-space:nowrap;transform:scaleX(0.8866);transform-origin:0 50%;">Добавить</div>
<div class="abs" style="left:1064.71px;top:258.15px;font-size:9.8px;line-height:11.7px;color:#2a2a2a;white-space:nowrap;transform:scaleX(0.8868);transform-origin:0 50%;">дверь</div>
<div class="abs" style="left:1119.4px;top:214.7px;width:72px;height:59.8px;background:#fff;border:1px solid #dedede;border-radius:3px"></div>
<div class="abs" style="left:1136.21px;top:248.15px;font-size:9.8px;line-height:11.7px;color:#2a2a2a;white-space:nowrap;transform:scaleX(0.8866);transform-origin:0 50%;">Добавить</div>
<div class="abs" style="left:1146.27px;top:258.15px;font-size:9.8px;line-height:11.7px;color:#2a2a2a;white-space:nowrap;transform:scaleX(0.8867);transform-origin:0 50%;">окно</div>
<div class="abs" style="left:961.4px;top:282px;width:72px;height:59.6px;background:#fff;border:1px solid #dedede;border-radius:3px"></div>
<div class="abs" style="left:971.37px;top:315.45px;font-size:9.8px;line-height:11.7px;color:#2a2a2a;white-space:nowrap;transform:scaleX(0.8867);transform-origin:0 50%;">Светильники</div>
<div class="abs" style="left:978.27px;top:325.45px;font-size:9.8px;line-height:11.7px;color:#2a2a2a;white-space:nowrap;transform:scaleX(0.8867);transform-origin:0 50%;">и люстры</div>
<div class="abs" style="left:1040.6px;top:282px;width:72px;height:59.6px;background:#fff;border:1px solid #dedede;border-radius:3px"></div>
<div class="abs" style="left:1056.74px;top:315.45px;font-size:9.8px;line-height:11.7px;color:#2a2a2a;white-space:nowrap;transform:scaleX(0.8863);transform-origin:0 50%;">Лестницы</div>
<div class="abs" style="left:1057.69px;top:325.45px;font-size:9.8px;line-height:11.7px;color:#2a2a2a;white-space:nowrap;transform:scaleX(0.8865);transform-origin:0 50%;">и вырезы</div>
<div class="abs" style="left:1119.4px;top:282px;width:72px;height:59.6px;background:#fff;border:1px solid #dedede;border-radius:3px"></div>
<div class="abs" style="left:1136.21px;top:315.45px;font-size:9.8px;line-height:11.7px;color:#2a2a2a;white-space:nowrap;transform:scaleX(0.8866);transform-origin:0 50%;">Добавить</div>
<div class="abs" style="left:1139.16px;top:325.45px;font-size:9.8px;line-height:11.7px;color:#2a2a2a;white-space:nowrap;transform:scaleX(0.8868);transform-origin:0 50%;">колонну</div>
<svg class="abs" style="left:989.5px;top:152.5px" width="16" height="26" viewBox="0 0 16 26"><path d="M3 1 L7 15 M7 2 L8 15 M13 2 L9 15 M1 4 L5 15" stroke="#555" stroke-width="1.4"/>
<path d="M12 1.5 L14 3 L9.5 15 L8 14Z" fill="#f0a030"/>
<path d="M2 10 L14 10 L13 25 L3 25Z" fill="#dbeaf8" stroke="#5b9ad8" stroke-width="1.3"/>
<path d="M5 12 L11 23 M11 12 L5 23" stroke="#e89a3a" stroke-width="1.3"/></svg>
<svg class="abs" style="left:1063px;top:152.5px" width="27" height="26" viewBox="0 0 27 26"><path d="M3 6 L12 1 L26 7 L26 17 L15 23 L3 17Z" fill="#c9b07a"/>
<path d="M3 6 L12 1 L12 12 L3 17Z" fill="#f1e6c6" stroke="#c2a66a" stroke-width="0.6"/>
<path d="M12 1 L26 7 L26 17 L12 12Z" fill="#f4cf3c"/>
<rect x="5" y="5" width="3" height="3" fill="#7ab0e0"/>
<path d="M3 17 L12 12 L26 17 L15 23Z" fill="#b09a6e"/>
<circle cx="7" cy="19.5" r="5.5" fill="#3cb34a" stroke="#fff" stroke-width="1"/>
<path d="M4 19.5 L10 19.5 M7 16.5 L7 22.5" stroke="#fff" stroke-width="1.6"/></svg>
<svg class="abs" style="left:1143.5px;top:155.5px" width="24.5" height="22" viewBox="0 0 24.5 22"><path d="M1 4 L16 1 L23.5 4 L23.5 17 L8.5 21 L1 17Z" fill="#c8504a"/>
<path d="M16 1 L23.5 4 L23.5 17 L16 14Z" fill="#a83a36"/>
<g stroke="#e89890" stroke-width="0.7" fill="none"><path d="M1 7.5 L16 4.5 M1 11 L16 8 M1 14.5 L16 11.5"/><path d="M5 3.2 L5 7 M10 2.2 L10 6 M3 7 L3 10.5 M8 6 L8 9.5 M13 5 L13 8.5 M5 10.5 L5 14 M10 9.5 L10 13"/></g>
<g stroke="#d07a72" stroke-width="0.7"><path d="M16 4.5 L23.5 7.5 M16 8 L23.5 11 M16 11.5 L23.5 14.5"/></g>
<path d="M1 17 L16 14 L23.5 17 L8.5 21Z" fill="#b8443e"/></svg>
<svg class="abs" style="left:987.5px;top:221px" width="20.5" height="23.5" viewBox="0 0 20.5 23.5"><path d="M3 5 Q3 1 10 1 Q18 1 18 5 L18 14 L3 14Z" fill="#6ab3e8"/>
<path d="M1 8 Q1 6 3 6 Q5 6 5 8 L5 17 L1 17Z" fill="#8ccaf2" stroke="#4a90c8" stroke-width="0.5"/>
<path d="M15.5 8 Q15.5 6 17.5 6 Q19.5 6 19.5 8 L19.5 17 L15.5 17Z" fill="#5aa6e0" stroke="#4a90c8" stroke-width="0.5"/>
<rect x="4.5" y="12" width="11.5" height="5" fill="#a8d8f6"/>
<path d="M2 17 L2.5 22.5 M18 17 L17.5 22.5 M7 17 L7 20 M14 17 L14 20" stroke="#e8b040" stroke-width="1.5"/></svg>
<svg class="abs" style="left:1067px;top:219.5px" width="19.5" height="26.5" viewBox="0 0 19.5 26.5"><rect x="0.8" y="0.8" width="17.5" height="25" fill="#f2a440" stroke="#d8862a" stroke-width="1"/>
<rect x="2.5" y="2.5" width="8" height="22" fill="#9ad24a"/>
<path d="M2.5 2.5 L2.5 24.5 L10.5 21 L10.5 6Z" fill="#f0e040"/>
<path d="M6 4 L16.5 2.5 L16.5 24.5 L6 23Z" fill="#f4b45a" stroke="#c8782a" stroke-width="0.8"/>
<rect x="9" y="6.5" width="5" height="6" fill="none" stroke="#d8903a" stroke-width="0.6"/>
<rect x="9" y="14.5" width="5" height="6" fill="none" stroke="#d8903a" stroke-width="0.6"/>
<circle cx="7.8" cy="13.5" r="0.7" fill="#6a3a10"/></svg>
<svg class="abs" style="left:1143.5px;top:220px" width="24" height="24.5" viewBox="0 0 24 24.5"><rect x="0.8" y="0.8" width="22.4" height="22.9" fill="#dfe3e6" stroke="#b8bec4" stroke-width="1"/>
<rect x="3" y="3" width="18" height="18.5" fill="#2aa4e0"/>
<path d="M3 8.5 L11 8.5 M11 3 L11 21.5" stroke="#e8eef2" stroke-width="1.6"/>
<path d="M4 10 L10 10 L10 20.5 L4 20.5Z" fill="#38b6ec"/></svg>
<svg class="abs" style="left:986.5px;top:287.5px" width="23" height="25.5" viewBox="0 0 23 25.5"><path d="M11.5 0.5 L11.5 6" stroke="#777" stroke-width="1.1"/>
<rect x="10" y="5" width="3" height="2.5" fill="#888"/>
<path d="M11.5 7 Q20 7.5 21.5 16 L1.5 16 Q3 7.5 11.5 7Z" fill="#e8554e"/>
<rect x="0.5" y="15.5" width="22" height="1.8" fill="#999"/>
<path d="M9 18 L10 19.5 M14 18 L13 19.5 M11.5 19 L11.5 21.5 M7 20 L8.5 21 M16 20 L14.5 21" stroke="#f0c040" stroke-width="1"/></svg>
<svg class="abs" style="left:1065.5px;top:289px" width="23" height="22.5" viewBox="0 0 23 22.5"><path d="M0.8 10 L10 1 L12 1" fill="none" stroke="#444" stroke-width="1.1"/>
<path d="M2.5 10 L2.5 22" stroke="#444" stroke-width="1.1"/>
<rect x="11" y="5" width="11.5" height="2.8" fill="#e07a3a"/>
<rect x="8" y="9.5" width="14.5" height="2.8" fill="#e07a3a"/>
<rect x="5.5" y="14" width="17" height="2.8" fill="#e07a3a"/>
<rect x="4" y="18.5" width="18.5" height="2.8" fill="#e07a3a"/></svg>
<svg class="abs" style="left:1143px;top:288.5px" width="25" height="23" viewBox="0 0 25 23"><path d="M1 1 L24 1 L24 3 L21 3 Q24 5 22 8 L3 8 Q1 5 4 3 L1 3Z" fill="#e6e6e6" stroke="#8a8a8a" stroke-width="0.8"/>
<circle cx="4.5" cy="5.5" r="1.6" fill="none" stroke="#777" stroke-width="0.7"/><circle cx="20.5" cy="5.5" r="1.6" fill="none" stroke="#777" stroke-width="0.7"/>
<path d="M10 4 L10 6 L15 6 L15 4" fill="none" stroke="#666" stroke-width="0.8"/>
<rect x="5" y="8.5" width="15" height="1.8" fill="#bbb"/>
<rect x="6" y="10.3" width="13" height="12" fill="#ededed"/>
<path d="M8 10.5 L8 22 M10.5 10.5 L10.5 22 M13 10.5 L13 22 M15.5 10.5 L15.5 22 M18 10.5 L18 22" stroke="#9a9a9a" stroke-width="0.8"/></svg>
<div class="abs" style="left:956px;top:348.6px;width:241px;height:19.8px;background:linear-gradient(#bcd4ec,#d6e4f3)"></div>
<div class="abs" style="left:965.20px;top:355.02px;font-size:9.2px;line-height:11.96px;color:#111;white-space:nowrap;font-weight:bold;transform:scaleX(0.9934);transform-origin:0 50%;">Список объектов</div>
<div class="abs" style="left:1124.70px;top:353.75px;font-size:9.8px;line-height:11.7px;color:#222;white-space:nowrap;transform:scaleX(0.8532);transform-origin:0 50%;">Вид списка</div>
<svg class="abs" style="left:1173.5px;top:352px" width="14" height="13" viewBox="0 0 14 13"><rect x="0.6" y="0.6" width="12.8" height="11.8" fill="#fbfbfb" stroke="#9aa7b5" stroke-width="0.9"/>
<path d="M3 3 L11 3 M4.5 5.5 L11 5.5 M4.5 8 L11 8 M4.5 10.5 L11 10.5 M3 3 L3 10.5 L4.5 10.5 M3 5.5 L4.5 5.5 M3 8 L4.5 8" stroke="#3b7fc8" stroke-width="0.9" fill="none"/></svg>
<div class="abs" style="left:958px;top:371.5px;width:237px;height:261.3px;background:#fff;border:1px solid #a0a0a0"></div>
<div class="abs" style="left:959px;top:402.7px;width:235px;height:1px;background:#e8e8e8"></div>
<div class="abs" style="left:959px;top:435.1px;width:235px;height:1px;background:#e8e8e8"></div>
<div class="abs" style="left:959px;top:467.0px;width:235px;height:1px;background:#e8e8e8"></div>
<div class="abs" style="left:990.90px;top:376.00px;font-size:10px;line-height:13.0px;color:#222;white-space:nowrap;transform:scaleX(0.9725);transform-origin:0 50%;">Кабинет</div>
<div class="abs" style="left:990.90px;top:388.98px;font-size:8.5px;line-height:11.05px;color:#333;white-space:nowrap;transform:scaleX(1.0152);transform-origin:0 50%;">372.7 x 448.0</div>
<div class="abs" style="left:1007.00px;top:407.30px;font-size:10px;line-height:13.0px;color:#222;white-space:nowrap;">Тройное окно</div>
<div class="abs" style="left:1007.00px;top:420.28px;font-size:8.5px;line-height:11.05px;color:#333;white-space:nowrap;transform:scaleX(1.0191);transform-origin:0 50%;">190.0 x 15.0 x 142.0</div>
<div class="abs" style="left:1007.00px;top:439.10px;font-size:10px;line-height:13.0px;color:#222;white-space:nowrap;">Дверь</div>
<div class="abs" style="left:1007.00px;top:451.68px;font-size:8.5px;line-height:11.05px;color:#333;white-space:nowrap;transform:scaleX(1.0178);transform-origin:0 50%;">80.0 x 15.0 x 200.0</div>
<svg class="abs" style="left:963px;top:375px" width="24" height="22" viewBox="0 0 24 22"><path d="M10.8 14.1 L22.3 6.3 L22.3 12 L11 20.6Z" fill="#f2f2f2" stroke="#d8d8d8" stroke-width="0.5"/>
<path d="M2 8.6 L13.3 2 L22.3 6.3 L10.8 14.1Z" fill="#ececec" stroke="#bdbdbd" stroke-width="0.6"/>
<path d="M13.3 2 L22.3 6.3 L15.5 10.5 L13.6 8.5Z" fill="#4a4a4a"/>
<path d="M2 8.6 L10.8 14.1 L11 20.6 L2.2 15.7Z" fill="#454545"/></svg>
<svg class="abs" style="left:980.5px;top:407px" width="20.5" height="23" viewBox="0 0 20.5 23"><path d="M1 1 L19.5 2.5 L19.5 20.5 L1 22Z" fill="#fafafa"/>
<path d="M1 1 L3.5 1.2 L3.5 21.8 L1 22Z" fill="#b8b8b8"/>
<path d="M7.2 1.5 L9 1.6 L9 21.4 L7.2 21.5Z" fill="#9a9a9a"/>
<path d="M12.8 1.9 L14.6 2 L14.6 21 L12.8 21.1Z" fill="#9a9a9a"/>
<path d="M17.8 2.3 L19.5 2.5 L19.5 20.5 L17.8 20.7Z" fill="#a8a8a8"/>
<path d="M3.5 21 L19.5 20 L19.5 20.6 L3.5 21.8Z" fill="#c8c8c8"/>
<path d="M3.5 1.2 L19.5 2.5" stroke="#d0d0d0" stroke-width="0.6"/></svg>
<svg class="abs" style="left:986.5px;top:439px" width="9.5" height="22" viewBox="0 0 9.5 22"><rect x="0.3" y="0.3" width="8.9" height="21.3" fill="#7fbccf"/>
<rect x="2.3" y="2.5" width="5" height="17" fill="#b9dde8"/>
<rect x="3.5" y="8" width="2.5" height="5" fill="#e8f4f8"/>
<rect x="1.8" y="11" width="1.2" height="2.5" fill="#2a6a7a"/></svg>
<svg class="abs" style="left:1174.5px;top:384.0px" width="12.5" height="9" viewBox="0 0 12.5 9"><path d="M0.7 4.5 Q6.25 -1.5 11.8 4.5 Q6.25 10.5 0.7 4.5Z" fill="#fff" stroke="#d69a4a" stroke-width="1.1"/>
<circle cx="6.25" cy="4.5" r="2.6" fill="#3fa84a"/><circle cx="6.25" cy="4.5" r="1" fill="#123"/></svg>
<svg class="abs" style="left:1174.5px;top:415.0px" width="12.5" height="9" viewBox="0 0 12.5 9"><path d="M0.7 4.5 Q6.25 -1.5 11.8 4.5 Q6.25 10.5 0.7 4.5Z" fill="#fff" stroke="#d69a4a" stroke-width="1.1"/>
<circle cx="6.25" cy="4.5" r="2.6" fill="#3fa84a"/><circle cx="6.25" cy="4.5" r="1" fill="#123"/></svg>
<svg class="abs" style="left:1174.5px;top:446.4px" width="12.5" height="9" viewBox="0 0 12.5 9"><path d="M0.7 4.5 Q6.25 -1.5 11.8 4.5 Q6.25 10.5 0.7 4.5Z" fill="#fff" stroke="#d69a4a" stroke-width="1.1"/>
<circle cx="6.25" cy="4.5" r="2.6" fill="#3fa84a"/><circle cx="6.25" cy="4.5" r="1" fill="#123"/></svg>
</body></html>
